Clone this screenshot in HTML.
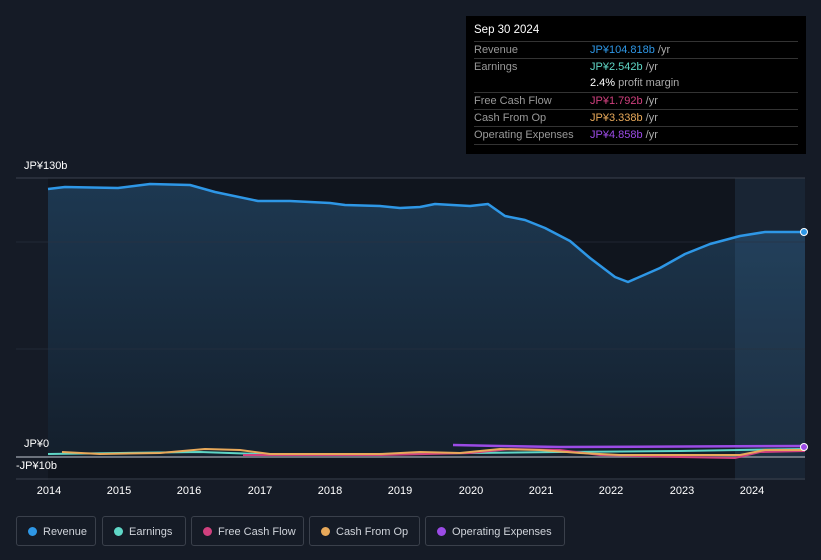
<!DOCTYPE html>
<html><head><meta charset="utf-8"><style>
body{margin:0;width:821px;height:560px;background:#151b26;font-family:"Liberation Sans",sans-serif;overflow:hidden;position:relative}
.tt{position:absolute;left:466px;top:16px;width:340px;height:138px;background:#000;color:#fff;font-size:11px}
.tt .h{position:absolute;left:8px;top:8px;font-size:11.5px}
.row{position:absolute;left:8px;width:324px;border-top:1px solid #333;height:17px;line-height:17px}
.row span{position:absolute;left:116px}
.row .l{position:relative;left:0;color:#999}
.yl{position:absolute;color:#fff;font-size:11px}
.xl{position:absolute;top:485px;color:#fff;font-size:11px;width:40px;text-align:center}
.lg{position:absolute;top:516px;height:30px;border:1px solid #3a404b;border-radius:3px;color:#cfd3da;font-size:11px;line-height:30px;box-sizing:border-box;padding-left:26px}
.lg i{position:absolute;left:11px;top:10px;width:9px;height:9px;border-radius:50%}
</style></head><body>
<svg width="821" height="560" style="position:absolute;left:0;top:0">
<defs><linearGradient id="g" x1="0" y1="0" x2="0" y2="1"><stop offset="0" stop-color="#1d3851"/><stop offset="1" stop-color="#141f2c"/></linearGradient></defs>
<rect x="48" y="178" width="757" height="302" fill="#10151e"/>
<path d="M48,189 L65,187 L118,188 L150,184 L190,185 L215,192 L258,201 L290,201 L330,203 L345,205 L380,206 L400,208 L420,207 L435,204 L470,206 L488,204 L505,216 L525,220 L545,228 L570,241 L590,258 L615,277 L628,282 L660,268 L685,254 L710,244 L740,236 L765,232 L805,232 L805,457 L48,457Z" fill="url(#g)"/>
<rect x="735" y="178" width="70" height="302" fill="#5aa0d8" opacity="0.12"/>
<line x1="16" y1="178" x2="805" y2="178" stroke="#3a414d"/>
<line x1="16" y1="242" x2="805" y2="242" stroke="#2a3140" opacity=".6"/>
<line x1="16" y1="349" x2="805" y2="349" stroke="#2a3140" opacity=".6"/>
<line x1="16" y1="457" x2="805" y2="457" stroke="#8a8f98" stroke-width="1.5"/>
<line x1="16" y1="479" x2="805" y2="479" stroke="#3a414d"/>
<path d="M48,189 L65,187 L118,188 L150,184 L190,185 L215,192 L258,201 L290,201 L330,203 L345,205 L380,206 L400,208 L420,207 L435,204 L470,206 L488,204 L505,216 L525,220 L545,228 L570,241 L590,258 L615,277 L628,282 L660,268 L685,254 L710,244 L740,236 L765,232 L805,232" fill="none" stroke="#2e97e6" stroke-width="2.5" stroke-linejoin="round"/>
<path d="M48,454 L120,453 L200,452 L260,454 L380,454 L470,453 L560,452 L680,451 L740,450 L805,449" fill="none" stroke="#5fd6c6" stroke-width="2"/>
<path d="M243,455 L380,455 L470,453 L510,449 L560,450 L600,455 L680,457 L735,458 L760,452 L805,451" fill="none" stroke="#d0407e" stroke-width="2"/>
<path d="M62,452 L100,454 L160,453 L205,449 L240,450 L270,454 L380,454 L420,452 L460,453 L500,449 L540,450 L580,453 L620,455 L700,455 L740,455 L765,450 L805,450" fill="none" stroke="#e8a95a" stroke-width="2"/>
<path d="M453,445 L500,446 L560,447 L805,446" fill="none" stroke="#9b4be6" stroke-width="2.5"/>
<circle cx="804" cy="232" r="3.5" fill="#2e97e6" stroke="#fff" stroke-width="1"/>
<circle cx="804" cy="447" r="3.5" fill="#9b4be6" stroke="#fff" stroke-width="1"/>
</svg>
<div class="yl" style="left:24px;top:160px">JP¥130b</div>
<div class="yl" style="left:24px;top:438px">JP¥0</div>
<div class="yl" style="left:16px;top:460px">-JP¥10b</div>
<div class="xl" style="left:29px">2014</div><div class="xl" style="left:99px">2015</div><div class="xl" style="left:169px">2016</div><div class="xl" style="left:240px">2017</div><div class="xl" style="left:310px">2018</div><div class="xl" style="left:380px">2019</div><div class="xl" style="left:451px">2020</div><div class="xl" style="left:521px">2021</div><div class="xl" style="left:591px">2022</div><div class="xl" style="left:662px">2023</div><div class="xl" style="left:732px">2024</div>
<div class="tt">
<div class="h">Sep 30 2024</div>
<div class="row" style="top:25px"><span class="l">Revenue</span><span style="color:#2e97e6">JP¥104.818b <b style="color:#aaa;font-weight:normal">/yr</b></span></div>
<div class="row" style="top:42px"><span class="l">Earnings</span><span style="color:#5fd6c6">JP¥2.542b <b style="color:#aaa;font-weight:normal">/yr</b></span></div>
<div class="row" style="top:59px;border:0"><span style="color:#fff">2.4% <b style="color:#aaa;font-weight:normal">profit margin</b></span></div>
<div class="row" style="top:76px"><span class="l">Free Cash Flow</span><span style="color:#d0407e">JP¥1.792b <b style="color:#aaa;font-weight:normal">/yr</b></span></div>
<div class="row" style="top:93px"><span class="l">Cash From Op</span><span style="color:#e8a95a">JP¥3.338b <b style="color:#aaa;font-weight:normal">/yr</b></span></div>
<div class="row" style="top:110px"><span class="l">Operating Expenses</span><span style="color:#9b4be6">JP¥4.858b <b style="color:#aaa;font-weight:normal">/yr</b></span></div>
<div class="row" style="top:128px;height:0"></div>
</div>
<div class="lg" style="left:16px;width:80px"><i style="background:#2e97e6"></i>Revenue</div>
<div class="lg" style="left:102px;width:84px"><i style="background:#5fd6c6"></i>Earnings</div>
<div class="lg" style="left:191px;width:113px"><i style="background:#d0407e"></i>Free Cash Flow</div>
<div class="lg" style="left:309px;width:111px"><i style="background:#e8a95a"></i>Cash From Op</div>
<div class="lg" style="left:425px;width:140px"><i style="background:#9b4be6"></i>Operating Expenses</div>
</body></html>
